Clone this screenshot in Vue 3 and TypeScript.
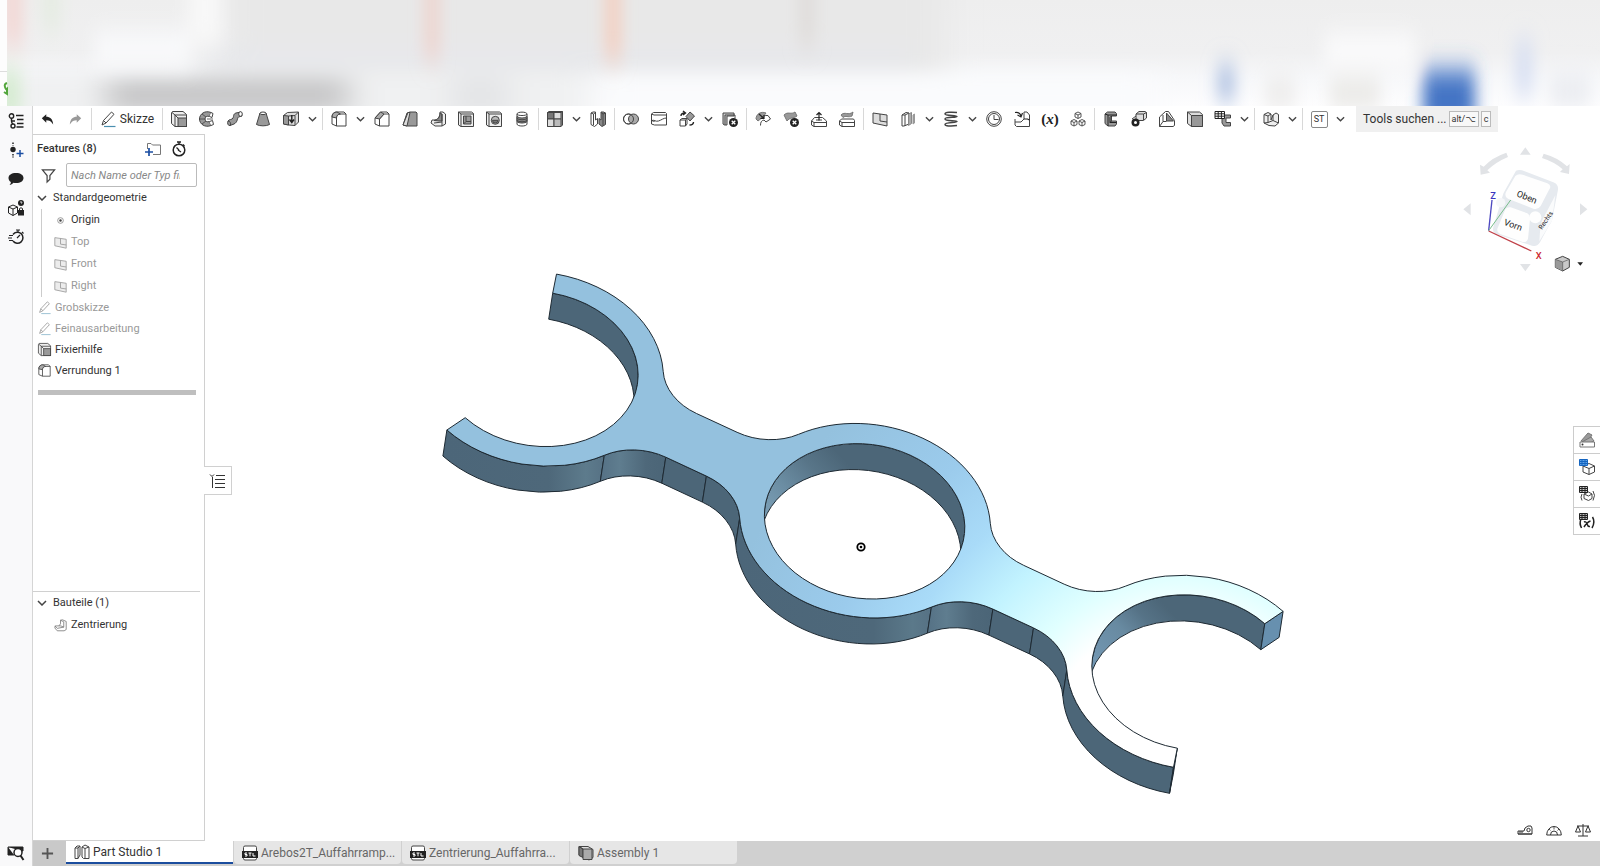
<script setup lang="ts">
import { ref } from 'vue'

interface Tool {
  icon?: string
  label?: string
  kind?: 'sep' | 'menu'
}
interface Feature {
  name: string
  icon: string
  muted?: boolean
}

/* ---------- icons, 16 x 16 units ---------- */
const badge =
  '<circle cx="11.5" cy="11.5" r="4.5" fill="#222" stroke="none"/><path d="M9.7 9.7l3.6 3.6M13.3 9.7l-3.6 3.6" stroke="#fff" stroke-width="1.3"/>'
const icons: Record<string, string> = {
  undo: '<path d="M1 6.500L6.500 1.500v3.200C11 4.700 14.500 7.500 15 14C12.500 9.800 10 8.800 6.500 8.800V12z" fill="#222" stroke="none"/>',
  redo: '<path d="M15 6.500L9.500 1.500v3.200C5 4.700 1.500 7.500 1 14C3.500 9.800 6 8.800 9.500 8.800V12z" fill="#999" stroke="none"/>',
  pen: '<path d="M2 14l1.500-4.500L11.500 1l2.500 2.300L6 12zM3.500 9.500L6 12"/><path d="M4 15.500h11.500" stroke="#4a8fb0" stroke-width="1.200"/>',
  extrude: '<path d="M.5 2l1-1.500H12l3.500 3v12H4L.5 12.500z" fill="#eee"/><path d="M1 1.500l3 2.500M4 4v11.500M4 4h11.500"/><rect x="7" y="7" width="8.500" height="8.500" fill="#999"/><path d="M4 4l3 3"/>',
  revolve: '<path d="M12 1.500C6-1 .5 3 .5 8s5.500 9 11.500 6.500l-1.500-4C8 11.500 6 10 6 8s2-3.500 4.500-2.500z" fill="#999"/><path d="M12 1.500l2 1-1 4-2.500-1M10.500 10.500l3-1 1 4-2.500 1" fill="#fff"/><path d="M.5 8H6M3 3l4 3M3 13l4-3M8 8h6" stroke-width=".8"/>',
  sweep: '<path d="M1 10c1-2 4-1 5-3s0-4 3-5l5-1 1 4-3.500 1C10 7 11 11 7 13l-4 1.500C1 15 0 12 1 10z" fill="#999"/><ellipse cx="13.500" cy="3" rx="1.800" ry="2.300" fill="#fff"/><path d="M1 10c2 0 3 2 2.500 4.500"/>',
  loft: '<path d="M5 2L1.500 13.500c3 1.800 10 1.800 13 0L11 2z" fill="#999"/><ellipse cx="8" cy="2.300" rx="3" ry="1.300" fill="#fff"/>',
  thicken: '<path d="M.5 4.500l4-3 11-.5v10l-3.500 3.500-6-.5-5.500-1z" fill="#ddd"/><path d="M.5 4.500l5 .5V14l-5-1z" fill="#999"/><path d="M5.500 5l6.500-.5V14.500M12 4.500L15.500 1"/><path d="M8.800 4v7M6.500 8.500L8.800 11.500 11 8.500" stroke="#222" stroke-width="1.400"/>',
  fillet: '<path d="M5.500 15V6.500C5.500 4 7 3 9.500 3H15v12zM5.500 15L1 13V6C1 2.500 3 1 6 1h7l2 2" fill="#fff"/><path d="M1 6C1 3 3 1 6 1l3.500 2C7 3 5.500 4.500 5.500 7z" fill="#aaa"/>',
  chamfer: '<path d="M5.500 15V8l4.500-5h5v12zM5.500 15L1 13V7l5.500-6H13l2 2" fill="#fff"/><path d="M1 7l5.500-6L10 3 5.500 8z" fill="#aaa"/>',
  draft: '<path d="M1 14L5 2l3-1h6l1 1v13H5z" fill="#999"/><path d="M1 14L6 1.500h2L5 15z" fill="#ddd"/>',
  rib: '<path d="M10 1h3l2.500 2v10L12 15H5l-4-3 1-3h3c4-1 5-4 5-8z" fill="#eee"/><path d="M10 2c0 4-2 7-6 7.500l5 .5h3V3z" fill="#888"/><path d="M12 3v8l-8 1M12 11v4"/>',
  shell: '<path d="M.5 1h13l2 1.500v13H3L.5 14z" fill="#eee"/><path d="M.5 1L3 3M3 3h12.500M3 3v12.500"/><path d="M5.500 5h7.500v8H5.500z" fill="#999"/><path d="M8 5v5.500h5M8 10.500L5.500 13"/>',
  hole: '<path d="M.5 1h13l2 1.500v13H3L.5 14z" fill="#eee"/><path d="M.5 1L3 3M3 3h12.500M3 3v12.500"/><circle cx="9.300" cy="9.300" r="4" fill="#bbb"/><path d="M6.500 9.300a2.800 2.800 0 1 0 5.600 0z" fill="#777"/>',
  thread: '<path d="M3 3c0-2.500 10-2.500 10 0v10c0 2.700-10 2.700-10 0z" fill="#fff"/><path d="M3 3c0 2 10 2 10 0"/><path d="M3 5.500c2 2 8 2 10 0v5c-2 2-8 2-10 0z" fill="#888"/><path d="M3 7.500c2 1.700 8 1.700 10 0M3 9.500c2 1.700 8 1.700 10 0"/>',
  pattern: '<path d="M.5 1.500L2 .5h13.500v13.500L14 15.500H.5z" fill="#999"/><path d="M.5 1.500H7v6.500H.5z" fill="#777"/><path d="M7 1.500h7V8H7zM.5 8H7v7.500H.5z" fill="#ddd"/><path d="M7 8h7v7.500H7z" fill="#bbb"/><path d="M14 1.500l1.500-1"/>',
  mirror: '<path d="M1 2l2-1h2.500v8l2-1.500V13l-3 2.500-3.500-2z" fill="#fff"/><path d="M1 2l2.500 1V14M3.500 3l2-1.500"/><path d="M15.500 2l-2-1H11v8L9 7.500V13l3 2.500 3.500-2z" fill="#888"/><path d="M15.500 2L13 3v11.500M13 3l-2-1.500"/>',
  boolean: '<circle cx="5.500" cy="8" r="5" fill="#fff"/><circle cx="10.500" cy="8" r="5" fill="#aaa"/><circle cx="5.500" cy="8" r="5"/>',
  split: '<path d="M.5 3L2.500 1.500h12l1 1V14h-12l-3-1z" fill="#fff"/><path d="M.5 3l2.500 1h12.500M.5 9.500c3-1 4 1.500 7 .5s5-3 8-3M.5 9.500l3 1"/>',
  transform: '<path d="M1 9l2-1.500h5V13l-1.500 2H1z" fill="#fff"/><path d="M1 9h5.500V15M6.500 9L8 7.500"/><path d="M11 1l4.500 4L11 10 7 5.500z" fill="#999"/><path d="M2 5c0-2 1-3 4-3M4 0l2.500 2L4 4M14.500 11c0 2-1 3-4 3" stroke="#222" stroke-width="1.400"/>',
  deletePart: '<path d="M1 2h11v3H5v9H2.500L1 13z" fill="#ccc"/><path d="M3 4h10v3M3 4v10" />' + badge,
  moveFace: '<path d="M1 8C1 3 6 0 11 2l-3 4-5 4z" fill="#999" stroke="#777"/><path d="M5.500 14.500C5.500 11 6.500 9.500 9 9l2 2 4.500-3-2.500-3.500c-3-.5-6 1-7 3" fill="#fff"/><path d="M4 3l5 4.500M9 4v3.500H5.500" stroke="#222" stroke-width="1.200"/>',
  deleteFace: '<path d="M1 4c4-4 7 0 11-3l2 4C10 8 7 6 4 10z" fill="#999" stroke="#777"/>' + badge,
  modify: '<path d="M.5 10l3-3.500h8l4 3.500v5.500H3L.5 14z" fill="#fff"/><path d="M.5 10L3 11.500h12.500M3 11.500v4M5 9h6"/><path d="M8 9.500V1.500M5.500 4L8 1.500 10.500 4" stroke="#222" stroke-width="1.200"/>',
  replace: '<path d="M2 4c4-4 7 1 12-3l-1 4c-4 2-6-1-9 1.500z" fill="#999" stroke="#777"/><path d="M.5 10l2-2h12l1 1.500v6H3L.5 14z" fill="#fff"/><path d="M.5 10L3 11.500h12.500M3 11.500v4"/>',
  plane: '<path d="M1 2l14 2v11L1 12z" fill="#ddd"/><path d="M8 3v7l7 1"/>',
  frame: '<path d="M2 4l4-2.500 3 .5v11l-5 2H2z" fill="#fff"/><path d="M2 4h3v11M5 4l4-2"/><path d="M8.500 3l3-1.500v11l-3 2z" fill="#aaa" stroke="#888"/><path d="M13 4l1.500-1v9L13 13z" fill="#999" stroke="#999"/>',
  helix: '<path d="M14 1.500C9 1 2 1 2 3s12 1 12 2.500S2 5.500 2 8s12 1 12 2.500-12 .5-12 3 12 1 12 1" stroke-width="1.500"/>',
  curve: '<circle cx="8" cy="8" r="7.300"/><circle cx="8" cy="8" r="5.500"/><path d="M8 4v4.500h4.500"/>',
  importShape: '<path d="M1 8v6l1.500 1.500h13V4l-2.500-3h-3v7L7 11H1" fill="#fff"/><path d="M10 8h3.500l2 1M1 1.500C4 1 6 2 7 5M3.500 4L7 6l1.500-4" stroke="#222" stroke-width="1.200"/>',
  cubes: '<g stroke-width=".9"><path d="M5 2.500L8 1l3 1.500V6L8 7.500 5 6zM5 2.500L8 4l3-1.500M8 4v3.500"/><path d="M1 10l3-1.500L7 10v3.500L4 15l-3-1.500zM1 10l3 1.500L7 10M4 11.500V15"/><path d="M9 10l3-1.500 3 1.500v3.500L12 15l-3-1.500zM9 10l3 1.500 3-1.500M12 11.500V15"/></g>',
  sheet: '<path d="M2 3l2.500-2H12l1.500 1.500V5H8.500v5h5v3L12 15H5L2 12.500z" fill="#999"/><path d="M2 3l3 1h8.500M5 4v11M8.500 10L7 11.500h6.500M8.500 5L7 6.500v5" stroke="#222"/>',
  convert: '<path d="M5 3l3-2.500h6l1.500 1V7l-3 2.500H5z" fill="#ddd"/><path d="M5 3h7.500v6M12.500 3l3-1.500M1 8l4-3"/><circle cx="4.500" cy="11.500" r="4" fill="#222" stroke="none"/><circle cx="4.500" cy="11.500" r="1.500" fill="#fff" stroke="none"/>',
  flange: '<path d="M.5 6l6-5.500h3l6 9v5l-1.500 1H.5z" fill="#fff"/><path d="M7.500 2l7 8h-7z" fill="#888"/><path d="M4 4v6.500M.5 15.500L4 10.500h3.500"/>',
  tab: '<path d="M.5 1h12l3 2.500v12H4.500l-4-3z" fill="#ddd"/><path d="M4.500 4.500h11v11h-11z" fill="#999"/><path d="M.5 1l4 3.500"/>',
  table: '<path d="M7 4h8.500v3H11v4.500h4.500V15H9l-2-3z" fill="#999"/><path d="M0 .5h9.500v7H0zM0 2.800h9.500M0 5.200h9.500M3.200.5v7M6.400.5v7" fill="#fff" stroke="#222"/>',
  flat: '<path d="M1 3.500l4-2L8 3v6l2-5 3-2 2.500 1.500V12L12 15l-6-.5L1 12z" fill="#eee"/><path d="M1 3.500L5 5v6.500L1 12M5 5l3-2M5 11.500l5-2 5.500 2.500M10 4v5.500"/>',
  folderAdd: '<path d="M2.500 8V2.500H6L7.500 4h8v9.500H8" stroke="#777"/><path d="M4 7v8M0 11h8" stroke="#1c4fa3" stroke-width="1.700"/>',
  stopwatch: '<circle cx="8" cy="9" r="5.800" stroke="#222" stroke-width="1.500"/><path d="M6 1h4M8 1v2.500M12 3.500l1.500 1.500M8 9L5.500 6.500M7 9l3 2" stroke="#222" stroke-width="1.300"/>',
  filter: '<path d="M1.500 2h13L9.500 8v4L6.500 15V8z" stroke-width="1.300"/>',
  part: '<path d="M8 1.500L10.500 1 15 3v10l-2.500 1.500H4L1 11l.5-2.500H6L8 6z" fill="#fff" stroke="#777"/><path d="M8 1.500L12 3.500v6.500L4 11.500M6 8.500h2.500L12 10M1 8.500L4 11.500" stroke="#777"/>',
  origin: '<circle cx="8" cy="8" r="3.500" stroke="#888"/><circle cx="8" cy="8" r="1.500" fill="#444" stroke="none"/>',
  partStudio: '<path d="M1 4l2-2h3v9L4 14.500H1zM1 4h3v10.500M4 4l2-2M8 3l3-2 4 2v11.500H9.500L8 13zM8 3l3 1.500V14.500M11 4.500L15 3" fill="#fff"/>',
  stl: '<path d="M1.500 2.500Q1.500 1 3 1h10q1.500 0 1.500 1.500v11q0 1.500-1.500 1.500H3q-1.500 0-1.500-1.500z" fill="#fff"/><rect x="0" y="6" width="16" height="7" fill="#222" stroke="none"/><path d="M5 8H3v1.500h2V11H3M6.500 8h3M8 8v3.300M11 8v3h2.500" stroke="#fff"/>',
  assembly: '<path d="M1 1.500h9l5 3v8L11 15 1 10z" fill="#ddd"/><path d="M1 1.500v9l4 2V4z" fill="#777"/><path d="M5 4h9v10.500H5z" fill="#aaa"/><path d="M1 1.500L5 4"/>',
  tree: '<g stroke="#222" stroke-width="1.400"><circle cx="3.500" cy="3" r="2.200"/><circle cx="5" cy="13" r="2"/><path d="M3.500 5v3q0 2 1.500 3M4 8h3M8 2.500h7.500M9 6.500h6.500M9 10.500h6.500M8.500 14h7"/></g>',
  insert: '<path d="M5 .5v3M5 12v3.500" stroke="#222" stroke-width="1.500" stroke-dasharray="1.500 1"/><circle cx="5" cy="7.500" r="2.700" fill="#222" stroke="none"/><path d="M12 8v7M8.500 11.500h7" stroke="#1c4fa3" stroke-width="1.500"/>',
  comment: '<path d="M8 2c4.500 0 7.500 2 7.500 5S12.500 12 8 12c-1 0-2 0-2.500-.2C4.500 13 3 14 1.500 14c1-.8 1.500-2 1.300-3C1.300 10 .5 8.500 .5 7 .5 4 3.500 2 8 2z" fill="#222" stroke="none"/>',
  cubeLock: '<path d="M.5 7l4.500-2 4.500 2v6L5 15.500.5 13zM.5 7L5 9l4.500-2M5 9v6.500" stroke="#222"/><circle cx="13" cy="3" r="3" fill="#222" stroke="none"/><path d="M12 2.300q1-1.300 2 0 0 .8-1 1.300" stroke="#fff" stroke-width=".8"/><rect x="10" y="10" width="6" height="5.500" fill="#222" stroke="none"/><path d="M11.500 10V8.500q1.500-1.500 3 0V10" stroke="#222"/>',
  fastWatch: '<path d="M5 5.500A5.500 5.500 0 1 1 5 12" stroke="#222" stroke-width="1.500"/><path d="M8 1h4M10 1v2M14 3l1.500 1.500M9 9l3-3M1 6.500h4M0 9h4M1 11.500h4" stroke="#222" stroke-width="1.200"/>',
  inspect: '<path d="M0 2h15v4h-1M0 2v8h6" fill="#222" stroke="#222"/><circle cx="10" cy="7.500" r="4" fill="#fff" stroke="#222" stroke-width="1.500"/><path d="M12.500 10.500L15.500 15" stroke="#222" stroke-width="2"/>',
  outline: '<path d="M0 1.500l2 2 2-2" stroke="#222"/><path d="M2.500 4v11M6 2.500h9M5 6.500h10M5 10.500h10M5 14.500h10" stroke="#333"/>',
  swatches: '<path d="M2 9l7-8 4 2-5 8z" fill="#999" stroke="#777"/><path d="M3 10l9-5 3 4-6 3z" fill="#aaa" stroke="#777"/><path d="M1 10h14.500v5H1z" fill="#fff" stroke="#777"/><circle cx="3.500" cy="12.500" r="1" fill="#333" stroke="none"/>',
  bom: '<path d="M4 7l6-2.500L15.500 7v6L10 15.500 4 13zM4 7l6 2.500L15.500 7M10 9.500v6" fill="#fff"/><path d="M.5.500h8v6h-8zM.5 2.500h8M.5 4.500h8M3 .5v6M6 .5v6" fill="#5ea2e6" stroke="#1565c0"/>',
  bomVar: '<path d="M5 8l4.500-2L13 8v4.500L9.500 14.500 5 12.500zM5 8l4.500 2L13 8M3 8q-2 3 0 6.500M14 5q3 4 0 9.500"/><path d="M.5.500h8v6h-8zM.5 2.500h8M.5 4.500h8M3 .5v6M6 .5v6" fill="#ccc" stroke="#222"/>',
  xTable: '<path d="M2 6q-2 4.500 .5 9M13.500 4q3 5-.5 11M5 9q2-1 3 2t3 2.500M11.500 8Q8 9 5 14" stroke="#222" stroke-width="1.500"/><path d="M.5.500h8v6h-8zM.5 2.500h8M.5 4.500h8M3 .5v6M6 .5v6" fill="#bbb" stroke="#222"/>',
  tape: '<path d="M1 9h6l1-3 3-2h3l1 2v6H1zM1 12h14M3 9v2M5 9v2" stroke="#333"/><circle cx="11.500" cy="8" r="1.700" stroke="#333"/>',
  protractor: '<path d="M.7 13a7.300 8.500 0 0 1 14.600 0zM4.500 13a3.500 4 0 0 1 7 0" stroke="#333"/><path d="M8 5v2.500M3 7l1.500 1.500M13 7l-1.500 1.500" stroke="#333" stroke-width=".8"/>',
  scale: '<path d="M8 2v12M3 14h10M2 4h12M0.500 10l2.500-6 2.500 6zM10.500 10L13 4l2.500 6z" stroke="#333"/>',
}

const sep: Tool = { kind: 'sep' }
const menu = (label: string): Tool => ({ kind: 'menu', label })
const tool = (icon: string, label: string): Tool => ({ icon, label })

const tools: Tool[] = [
  sep,
  tool('extrude', 'Extrudieren'), tool('revolve', 'Drehen'), tool('sweep', 'Sweep'), tool('loft', 'Loft'), tool('thicken', 'Verdicken'), menu('Weitere Körper'),
  sep,
  tool('fillet', 'Verrundung'), menu('Weitere Verrundungen'), tool('chamfer', 'Fase'), tool('draft', 'Formschräge'), tool('rib', 'Rippe'), tool('shell', 'Wandung'), tool('hole', 'Bohrung'), tool('thread', 'Gewinde'),
  sep,
  tool('pattern', 'Muster'), menu('Weitere Muster'), tool('mirror', 'Spiegeln'),
  sep,
  tool('boolean', 'Boolesch'), tool('split', 'Teilen'), tool('transform', 'Transformieren'), menu('Weitere Transformationen'), tool('deletePart', 'Bauteil löschen'),
  sep,
  tool('moveFace', 'Fläche verschieben'), tool('deleteFace', 'Fläche löschen'), tool('modify', 'Fläche ändern'), tool('replace', 'Fläche ersetzen'),
  sep,
  tool('plane', 'Ebene'), tool('frame', 'Rahmen'), menu('Weitere Rahmen'), tool('helix', 'Helix'), menu('Weitere Kurven'), tool('curve', 'Kurve'), tool('importShape', 'Ableiten'), tool('variable', 'Variable'), tool('cubes', 'Zusammengesetztes Bauteil'),
  sep,
  tool('sheet', 'Blechmodell'), tool('convert', 'Konvertieren'), tool('flange', 'Flansch'), tool('tab', 'Lasche'), tool('table', 'Blechtabelle'), menu('Weitere Blechfunktionen'),
  sep,
  tool('flat', 'Abwicklung'), menu('Weitere Abwicklungen'),
  sep,
  tool('st', 'ST'), menu('Eigene Funktionen'),
]

const geometry: Feature[] = [
  { name: 'Origin', icon: 'origin' },
  { name: 'Top', icon: 'plane', muted: true },
  { name: 'Front', icon: 'plane', muted: true },
  { name: 'Right', icon: 'plane', muted: true },
]
const features: Feature[] = [
  { name: 'Grobskizze', icon: 'pen', muted: true },
  { name: 'Feinausarbeitung', icon: 'pen', muted: true },
  { name: 'Fixierhilfe', icon: 'extrude' },
  { name: 'Verrundung 1', icon: 'fillet' },
]
const rail = [
  { icon: 'tree', label: 'Featureliste' },
  { icon: 'insert', label: 'Einfügen' },
  { icon: 'comment', label: 'Kommentare' },
  { icon: 'cubeLock', label: 'Konfiguration' },
  { icon: 'fastWatch', label: 'Verlauf' },
]
const sideTools = [
  { icon: 'swatches', label: 'Darstellungen' },
  { icon: 'bom', label: 'Stückliste' },
  { icon: 'bomVar', label: 'Konfigurationstabelle' },
  { icon: 'xTable', label: 'Variablentabelle' },
]
const measureTools = [
  { icon: 'tape', label: 'Messen' },
  { icon: 'protractor', label: 'Winkel' },
  { icon: 'scale', label: 'Masse' },
]
const tabs = [
  { name: 'Part Studio 1', icon: 'partStudio' },
  { name: 'Arebos2T_Auffahrramp...', icon: 'stl' },
  { name: 'Zentrierung_Auffahrra...', icon: 'stl' },
  { name: 'Assembly 1', icon: 'assembly' },
]
const activeTab = ref(0)
const search = ref('')

/* ---------- part geometry ----------
   The part is defined in its own plane: three rings on one axis, joined by
   bars with rounded corners. It is then projected to the view. */
const D = 3.68
const OUT = 1.252
const FIL = 0.62
const BAR = 0.332
const FX = Math.sqrt((OUT + FIL) ** 2 - (BAR + FIL) ** 2)
const FY = BAR + FIL
const TAN = (Math.atan2(FY, FX) * 180) / Math.PI
const TIP = 71
const DROP: [number, number] = [-4, 26]

type Seg = { c?: [number, number]; r?: number; from?: number; to?: number; p?: [number, number]; q?: [number, number] }

function view([a, b]: [number, number], low = false): string {
  const x = 865 + 88.88 * a - 46.26 * b + (low ? DROP[0] : 0)
  const y = 520.7 + 41.26 * a + 65.84 * b + (low ? DROP[1] : 0)
  return `${x.toFixed(1)} ${y.toFixed(1)}`
}
function polar(c: [number, number], r: number, deg: number): [number, number] {
  const t = (deg * Math.PI) / 180
  return [c[0] + r * Math.cos(t), c[1] + r * Math.sin(t)]
}
const arc = (c: [number, number], r: number, from: number, to: number): Seg => ({ c, r, from, to })
const startOf = (s: Seg) => (s.c ? polar(s.c, s.r!, s.from!) : s.p!)
const endOf = (s: Seg) => (s.c ? polar(s.c, s.r!, s.to!) : s.q!)
const reverse = (s: Seg): Seg => (s.c ? { ...s, from: s.to, to: s.from } : { p: s.q, q: s.p })
function draw(s: Seg, low = false): string {
  if (!s.c) return `L${view(endOf(s), low)}`
  const large = Math.abs(s.to! - s.from!) > 180 ? 1 : 0
  const sweep = s.to! > s.from! ? 1 : 0
  return `A${(100.7 * s.r!).toFixed(1)} ${(77.1 * s.r!).toFixed(1)} 8.6 ${large} ${sweep} ${view(endOf(s), low)}`
}
const wall = (s: Seg) => `M${view(startOf(s))}${draw(s)}L${view(endOf(s), true)}${draw(reverse(s), true)}Z`

const L: [number, number] = [-D, 0]
const M: [number, number] = [0, 0]
const R: [number, number] = [D, 0]

function joint(x: number): Seg[] {
  return [
    arc([x + FX, FY], FIL, 180 + TAN, 270),
    { p: [x + FX, BAR], q: [x + D - FX, BAR] },
    arc([x + D - FX, FY], FIL, 270, 360 - TAN),
  ]
}
const front: Seg[] = [
  arc(L, OUT, 180 - TIP, TAN),
  ...joint(-D),
  arc(M, OUT, 180 - TAN, TAN),
  ...joint(0),
  arc(R, OUT, 180 - TAN, TIP),
]
const flip = (s: Seg): Seg =>
  s.c
    ? { c: [-s.c[0], -s.c[1]], r: s.r, from: s.from! + 180, to: s.to! + 180 }
    : { p: [-s.p![0], -s.p![1]], q: [-s.q![0], -s.q![1]] }

const innerR = arc(R, 1, TIP, 360 - TIP)
const innerL = flip(innerR)
const face =
  `M${view(startOf(front[0]))}` +
  front.map((s) => draw(s)).join('') +
  `L${view(startOf(innerR))}${draw(innerR)}` +
  `L${view(startOf(flip(front[0])))}` +
  front.map((s) => draw(flip(s))).join('') +
  `L${view(startOf(innerL))}${draw(innerL)}Z`
const circle = (low: boolean) => {
  const a = arc(M, 1, 0, 179)
  const b = arc(M, 1, 179, 360)
  return `M${view(startOf(a), low)}${draw(a, low)}${draw(b, low)}Z`
}
const bore = circle(false)
const boreLow = circle(true)
const fills = ['wallA', 'wallB', 'wallC', 'wallC', 'wallA2', 'wallD', 'wallC', 'wallC', 'wallC']
const backL = wall(arc(L, 1, -109, -20.8))
const backR = wall(arc(R, 1, 159.2, 289))
const quad = (p: [number, number], q: [number, number]) => `M${view(p)}L${view(q)}L${view(q, true)}L${view(p, true)}Z`
const endTop = quad(polar(R, 1, -TIP), polar(R, OUT, -TIP))
const endLow = quad(polar(R, OUT, TIP), polar(R, 1, TIP))
</script>

<template>
  <div class="app">
    <header class="blurred" aria-hidden="true">
      <svg viewBox="0 0 1600 106" preserveAspectRatio="none">
        <defs>
          <linearGradient id="hb" x1="0" y1="0" x2="0" y2="1">
            <stop offset="0" stop-color="#eeeeee" />
            <stop offset=".5" stop-color="#f0f0f1" />
            <stop offset=".75" stop-color="#f7f8fa" />
            <stop offset="1" stop-color="#fdfdfe" />
          </linearGradient>
          <filter id="wide" filterUnits="userSpaceOnUse" x="-60" y="-60" width="1720" height="230"><feGaussianBlur stdDeviation="16 9" /></filter>
          <filter id="soft" filterUnits="userSpaceOnUse" x="-60" y="-60" width="1720" height="230"><feGaussianBlur stdDeviation="8 13" /></filter>
        </defs>
        <rect width="1600" height="106" fill="url(#hb)" />
        <g filter="url(#wide)">
          <rect x="225" y="-40" width="720" height="112" fill="#e8e8e8" />
          <rect x="200" y="45" width="710" height="25" fill="#e7e8eb" />
          <rect x="600" y="74" width="560" height="60" fill="#fafbfd" />
          <rect x="-20" y="72" width="610" height="60" fill="#f0f1f2" />
          <rect x="105" y="77" width="245" height="36" fill="#c9c9ca" />
          <rect x="450" y="76" width="60" height="40" fill="#e4e5e7" />
        </g>
        <g filter="url(#soft)">
          <rect x="95" y="34" width="95" height="30" fill="#fafbfd" />
          <rect x="188" y="-30" width="34" height="76" fill="#f8f8f8" />
          <rect x="1325" y="36" width="90" height="30" fill="#fcfcfd" />
          <rect x="4" y="-30" width="18" height="76" fill="#f3d6d3" />
          <rect x="42" y="-30" width="18" height="62" fill="#e5ece2" />
          <rect x="426" y="-30" width="12" height="90" fill="#efcfc8" />
          <rect x="606" y="-30" width="14" height="90" fill="#f4ccbc" />
          <rect x="800" y="-30" width="14" height="76" fill="#dedad8" />
          <rect x="0" y="70" width="20" height="50" fill="#d3ebce" />
          <rect x="1218" y="66" width="16" height="34" fill="#a6bade" />
          <rect x="1265" y="78" width="30" height="30" fill="#ecebea" />
          <rect x="1330" y="78" width="50" height="30" fill="#e9e8e5" />
          <rect x="1423" y="70" width="52" height="60" fill="#4273c4" />
          <rect x="1516" y="40" width="16" height="56" fill="#d6def2" />
          <rect x="1550" y="76" width="40" height="30" fill="#e9ebf0" />
        </g>
        <rect width="7" height="106" fill="#fdfdfd" />
        <path d="M0 71.500h7" stroke="#dddddd" />
        <path d="M7 83q-3 1-2 4t2 2v5l-3-2" fill="none" stroke="#53a63c" stroke-width="2" />
      </svg>
    </header>

    <div class="workspace">
      <nav class="rail" aria-label="Seitenleiste">
        <button v-for="r in rail" :key="r.icon" type="button" :aria-label="r.label">
          <svg class="ic" viewBox="0 0 16 16" v-html="icons[r.icon]"></svg>
        </button>
        <button type="button" class="last" aria-label="Tab-Manager">
          <svg class="ic" viewBox="0 0 16 16" v-html="icons.inspect"></svg>
        </button>
      </nav>

      <div class="main">
        <div class="toolbar" role="toolbar" aria-label="Werkzeuge">
          <button type="button" class="tool" aria-label="Rückgängig"><svg class="ic sm" viewBox="0 0 16 16" v-html="icons.undo"></svg></button>
          <button type="button" class="tool" aria-label="Wiederholen"><svg class="ic sm" viewBox="0 0 16 16" v-html="icons.redo"></svg></button>
          <span class="sep"></span>
          <button type="button" class="sketch">
            <svg class="ic" viewBox="0 0 16 16" v-html="icons.pen"></svg><span>Skizze</span>
          </button>
          <template v-for="(t, i) in tools" :key="i">
            <span v-if="t.kind === 'sep'" class="sep"></span>
            <button v-else-if="t.kind === 'menu'" type="button" class="drop" :aria-label="t.label">
              <svg viewBox="0 0 10 6"><path d="M1 1l4 4 4-4" /></svg>
            </button>
            <button v-else type="button" class="tool" :aria-label="t.label">
              <span v-if="t.icon === 'st'" class="st">ST</span>
              <span v-else-if="t.icon === 'variable'" class="var">(<i>x</i>)</span>
              <svg v-else class="ic" viewBox="0 0 16 16" v-html="icons[t.icon!]"></svg>
            </button>
          </template>
          <button type="button" class="find"><span>Tools suchen ...</span><kbd>alt/⌥</kbd><kbd>c</kbd></button>
        </div>

        <div class="content">
          <aside class="panel">
            <div class="title">
              <h2>Features (8)</h2>
              <button type="button" aria-label="Ordner hinzufügen"><svg class="ic" viewBox="0 0 16 16" v-html="icons.folderAdd"></svg></button>
              <button type="button" aria-label="Regenerierungszeit"><svg class="ic" viewBox="0 0 16 16" v-html="icons.stopwatch"></svg></button>
            </div>
            <div class="filter">
              <svg class="ic" viewBox="0 0 16 16" v-html="icons.filter"></svg>
              <input v-model="search" type="text" aria-label="Features filtern" placeholder="Nach Name oder Typ filtern" />
            </div>
            <button type="button" class="row head">
              <svg class="chev" viewBox="0 0 10 6"><path d="M1 1l4 4 4-4" /></svg>Standardgeometrie
            </button>
            <ul class="children">
              <li v-for="g in geometry" :key="g.name" class="row" :class="{ muted: g.muted }">
                <svg class="ic li" viewBox="0 0 16 16" v-html="icons[g.icon]"></svg>{{ g.name }}
              </li>
            </ul>
            <ul class="features">
              <li v-for="f in features" :key="f.name" class="row" :class="{ muted: f.muted }">
                <svg class="ic li" viewBox="0 0 16 16" v-html="icons[f.icon]"></svg>{{ f.name }}
              </li>
            </ul>
            <div class="rollback"></div>
            <section class="parts">
              <button type="button" class="row head">
                <svg class="chev" viewBox="0 0 10 6"><path d="M1 1l4 4 4-4" /></svg>Bauteile (1)
              </button>
              <div class="row part"><svg class="ic li" viewBox="0 0 16 16" v-html="icons.part"></svg>Zentrierung</div>
            </section>
          </aside>

          <main class="canvas">
            <button type="button" class="collapse" aria-label="Liste einklappen">
              <svg class="ic" viewBox="0 0 16 16" v-html="icons.outline"></svg>
            </button>

            <svg class="model" viewBox="205 134 1395 707" role="img" aria-label="Zentrierung">
              <defs>
                <radialGradient id="top" gradientUnits="userSpaceOnUse" cx="1180" cy="760" r="480">
                  <stop offset="0" stop-color="#ffffff" />
                  <stop offset=".29" stop-color="#ffffff" />
                  <stop offset=".38" stop-color="#e0ffff" />
                  <stop offset=".5" stop-color="#c2f3ff" />
                  <stop offset=".62" stop-color="#a9dbf8" />
                  <stop offset=".77" stop-color="#9bcbec" />
                  <stop offset="1" stop-color="#94c1de" />
                </radialGradient>
                <linearGradient id="wallA" gradientUnits="userSpaceOnUse" x1="445" y1="0" x2="605" y2="0">
                  <stop offset="0" stop-color="#4c6679" /><stop offset=".65" stop-color="#4e687a" /><stop offset=".88" stop-color="#5d7b8c" /><stop offset="1" stop-color="#567184" />
                </linearGradient>
                <linearGradient id="wallB" gradientUnits="userSpaceOnUse" x1="600" y1="0" x2="666" y2="0">
                  <stop offset="0" stop-color="#557185" /><stop offset=".3" stop-color="#5f7d8f" /><stop offset=".7" stop-color="#4e687a" /><stop offset="1" stop-color="#4b6577" />
                </linearGradient>
                <linearGradient id="wallA2" gradientUnits="userSpaceOnUse" x1="737" y1="0" x2="932" y2="0">
                  <stop offset="0" stop-color="#4c6679" /><stop offset=".7" stop-color="#4e687a" /><stop offset=".9" stop-color="#5b798a" /><stop offset="1" stop-color="#567184" />
                </linearGradient>
                <linearGradient id="wallD" gradientUnits="userSpaceOnUse" x1="927" y1="0" x2="992" y2="0">
                  <stop offset="0" stop-color="#557185" /><stop offset=".3" stop-color="#5f7d8f" /><stop offset=".7" stop-color="#4e687a" /><stop offset="1" stop-color="#4b6577" />
                </linearGradient>
                <linearGradient id="wallC"><stop offset="0" stop-color="#4c6678" /><stop offset="1" stop-color="#4c6678" /></linearGradient>
                <linearGradient id="bore" gradientUnits="userSpaceOnUse" x1="765" y1="515" x2="835" y2="450">
                  <stop offset="0" stop-color="#7b9fb6" /><stop offset=".35" stop-color="#6b8da3" /><stop offset=".7" stop-color="#587588" /><stop offset="1" stop-color="#4c6678" />
                </linearGradient>
                <linearGradient id="boreR" gradientUnits="userSpaceOnUse" x1="1092" y1="667" x2="1162" y2="602">
                  <stop offset="0" stop-color="#7398b4" /><stop offset=".5" stop-color="#688aa1" /><stop offset=".75" stop-color="#567387" /><stop offset="1" stop-color="#4c6678" />
                </linearGradient>
                <clipPath id="boreClip"><path :d="bore" /></clipPath>
              </defs>
              <g class="edges">
                <path :d="backL" fill="url(#wallC)" />
                <path :d="backR" fill="url(#boreR)" />
                <path :d="endTop" fill="#6790af" />
                <path v-for="(s, i) in front" :key="i" :d="wall(s)" :fill="`url(#${fills[i]})`" />
                <path :d="endLow" fill="#1d2a33" />
                <g clip-path="url(#boreClip)">
                  <path :d="bore" fill="url(#bore)" />
                  <path :d="boreLow" fill="#ffffff" />
                </g>
                <path :d="face + bore" fill="url(#top)" fill-rule="evenodd" />
              </g>
              <circle cx="861" cy="547" r="3.700" fill="#fff" stroke="#000" stroke-width="1.800" />
              <circle cx="861" cy="547" r="1.300" fill="#000" />
            </svg>

            <svg class="cube" viewBox="0 0 480 450" role="img" aria-label="Ansichtswürfel">
              <g fill="#e1e3e6">
                <path d="M240 74l16-22 16 22zM240 402l16 22 16-22zM92 220v36l-22-18zM420 220v36l22-18z" />
                <path d="M120 104l2 30 28-6-8-7q24-24 62-40l-5-13q-42 14-68 42zM389 102l-2 30-27-6 8-8q-24-22-62-34l5-13q44 12 70 38z" />
              </g>
              <path d="M228 122q8-4 18-1l94 36q16 6 14 22l-18 92q-2 8-8 14l-28 52q-8 14-24 10l-106-34q-14-6-10-22l28-94q2-8 6-14z" fill="#e6eaef" />
              <path d="M226 138q8-8 22-4l74 26q14 6 6 18l-26 50q-8 12-22 8l-76-30q-12-6-6-20z" fill="#fefefe" />
              <path d="M196 238q6-8 16-6l50 18q10 6 8 18l-6 58q-4 12-16 10l-68-24q-10-4-8-16z" fill="#fefefe" />
              <path d="M346 196l-10 76-38 62q0-30 8-62z" fill="#fafbfc" />
              <circle cx="286" cy="262" r="18" fill="#fefefe" /><circle cx="182" cy="218" r="14" fill="#f6f7f9" />
              <path d="M146 302l10-92" stroke="#4d48c0" stroke-width="4" />
              <path d="M146 302l66-92" stroke="#79bd8c" stroke-width="3" />
              <path d="M146 303l128 60" stroke="#c04048" stroke-width="4" />
              <text x="151" y="206" class="axis z">Z</text>
              <text x="287" y="387" class="axis x">X</text>
              <text transform="translate(228 198) rotate(22)" class="lab">Oben</text>
              <text transform="translate(190 284) rotate(20)" class="lab">Vorn</text>
              <text transform="translate(306 300) rotate(-56)" class="lab side">Rechts</text>
              <path d="M346 388l22-9 20 9v24l-20 11-22-11z" fill="#c9c9c9" stroke="#444" stroke-width="3" />
              <path d="M346 388l22 8v27l-22-11z" fill="#999" /><path d="M346 388l22 8 20-8M368 396v27" fill="none" stroke="#555" stroke-width="2" />
              <path d="M412 397h17l-8 10z" fill="#222" />
            </svg>

            <div class="side">
              <button v-for="s in sideTools" :key="s.icon" type="button" :aria-label="s.label">
                <svg class="ic" viewBox="0 0 16 16" v-html="icons[s.icon]"></svg>
              </button>
            </div>
            <div class="measure">
              <button v-for="m in measureTools" :key="m.icon" type="button" :aria-label="m.label">
                <svg class="ic" viewBox="0 0 16 16" v-html="icons[m.icon]"></svg>
              </button>
            </div>
          </main>
        </div>

        <div class="tabs">
          <button type="button" class="add" aria-label="Tab hinzufügen">
            <svg viewBox="0 0 14 14"><path d="M7 1v12M1 7h12" /></svg>
          </button>
          <button v-for="(t, i) in tabs" :key="t.name" type="button" class="tab" :class="{ active: i === activeTab }" @click="activeTab = i">
            <svg class="ic" viewBox="0 0 16 16" v-html="icons[t.icon]"></svg><span>{{ t.name }}</span>
          </button>
        </div>
      </div>
    </div>
  </div>
</template>

<style>
html,
body,
#app {
  height: 100%;
}
body {
  margin: 0;
}
</style>

<style scoped>
.app {
  display: flex;
  flex-direction: column;
  height: 100%;
  overflow: hidden;
  background: #fff;
  color: #333;
  font: 12px/16px Roboto, 'Liberation Sans', sans-serif;
}
button {
  display: flex;
  align-items: center;
  justify-content: center;
  padding: 0;
  border: 0;
  background: none;
  color: inherit;
  font: inherit;
}
ul {
  margin: 0;
  padding: 0;
  list-style: none;
}
.ic {
  flex: none;
  width: 16px;
  height: 16px;
  fill: none;
  stroke: #444;
  overflow: visible;
}
.ic.sm {
  width: 13px;
  height: 13px;
}
.blurred {
  flex: none;
  height: 106px;
  overflow: hidden;
}
.blurred svg {
  display: block;
  width: 100%;
  height: 100%;
}
.workspace {
  display: flex;
  flex: 1;
  min-height: 0;
}
.rail {
  display: flex;
  flex: none;
  flex-direction: column;
  box-sizing: border-box;
  width: 33px;
  border-right: 1px solid #d5d5d5;
  background: #f9f9fa;
}
.rail button {
  height: 29px;
}
.rail .last {
  height: 26px;
  margin-top: auto;
}
.main {
  display: flex;
  flex: 1;
  flex-direction: column;
  min-width: 0;
}
.toolbar {
  display: flex;
  flex: none;
  align-items: center;
  height: 26px;
  padding-bottom: 2px;
  overflow: hidden;
}
.tool {
  flex: none;
  width: 28px;
  height: 26px;
}
.drop {
  flex: none;
  width: 15px;
  height: 26px;
}
.drop svg {
  width: 9px;
  height: 6px;
  fill: none;
  stroke: #444;
  stroke-width: 1.5;
}
.sep {
  flex: none;
  width: 1px;
  height: 22px;
  margin: 0 2px;
  background: #d8d8d8;
}
.sketch {
  flex: none;
  gap: 4px;
  width: 66px;
}
.st {
  box-sizing: border-box;
  width: 17px;
  height: 17px;
  border: 1px solid #888;
  border-radius: 2px;
  font-size: 9px;
  line-height: 15px;
}
.var {
  color: #222;
  font: bold 15px/18px 'Liberation Serif', serif;
}
.find {
  flex: none;
  gap: 2px;
  height: 26px;
  margin-left: 8px;
  padding: 0 7px;
  background: #f0f0f0;
}
kbd {
  padding: 0 2px;
  border: 1px solid #bbb;
  background: #f8f8f8;
  font: 9px/14px Roboto, 'DejaVu Sans', sans-serif;
}
.content {
  display: flex;
  flex: 1;
  min-height: 0;
}
.panel {
  display: flex;
  flex: none;
  flex-direction: column;
  box-sizing: border-box;
  width: 172px;
  border: solid #d0d0d0;
  border-width: 1px 1px 1px 0;
  font-size: 11px;
}
.title {
  display: flex;
  align-items: center;
  gap: 10px;
  height: 28px;
  padding: 0 17px 0 4px;
}
.title h2 {
  flex: 1;
  margin: 0;
  font-size: 11px;
  font-weight: 500;
}
.filter {
  display: flex;
  align-items: center;
  gap: 10px;
  height: 24px;
  padding: 0 7px 0 8px;
}
.filter input {
  box-sizing: border-box;
  flex: 1;
  min-width: 0;
  height: 24px;
  padding: 0 16px 0 4px;
  border: 1px solid #bbb;
  border-radius: 2px;
  outline: 0;
  font: italic 11px/16px Roboto, 'Liberation Sans', sans-serif;
}
.filter input::placeholder {
  color: #888;
}
.filter .ic {
  width: 15px;
  height: 15px;
}
.row {
  display: flex;
  align-items: center;
  gap: 4px;
  width: 100%;
  height: 22px;
  white-space: nowrap;
}
.row.head {
  justify-content: flex-start;
  gap: 6px;
  padding-left: 4px;
}
.chev {
  width: 10px;
  height: 6px;
  fill: none;
  stroke: #444;
  stroke-width: 1.5;
}
.ic.li {
  width: 13px;
  height: 13px;
}
.children {
  margin-left: 8px;
  border-left: 1px solid #ccc;
}
.children .row {
  box-sizing: border-box;
  padding-left: 12px;
}
.features .row {
  box-sizing: border-box;
  height: 21px;
  padding-left: 5px;
}
.muted {
  color: #999;
}
.muted .ic {
  opacity: 0.55;
}
.rollback {
  flex: none;
  height: 5px;
  margin: 9px 8px 0 5px;
  background: #bfbfbf;
}
.parts {
  height: 248px;
  margin: auto 4px 0 0;
  border-top: 1px solid #d0d0d0;
}
.parts .part {
  box-sizing: border-box;
  padding-left: 21px;
}
.canvas {
  position: relative;
  flex: 1;
  min-width: 0;
}
.model {
  display: block;
  width: 100%;
  height: 100%;
}
.edges path {
  stroke: #1e2a33;
  stroke-width: 1;
  stroke-linejoin: round;
}
.collapse {
  position: absolute;
  top: 332px;
  left: -1px;
  width: 28px;
  height: 29px;
  border: 1px solid #d0d0d0;
  border-left: 0;
  background: #fff;
}
.cube {
  position: absolute;
  top: -4px;
  right: 0;
  width: 160px;
  height: 150px;
}
.axis {
  font: 500 28px Roboto, sans-serif;
}
.axis.z {
  fill: #3b35c0;
}
.axis.x {
  fill: #cc2a30;
}
.lab {
  fill: #222;
  font: 27px Roboto, sans-serif;
}
.lab.side {
  font-size: 20px;
}
.side {
  position: absolute;
  top: 292px;
  right: 0;
  width: 26px;
  border: solid #ccc;
  border-width: 1px 0 0 1px;
  background: #fff;
}
.side button {
  width: 100%;
  height: 27px;
  border-bottom: 1px solid #ccc;
}
.measure {
  position: absolute;
  right: 9px;
  bottom: 3px;
  display: flex;
  gap: 13px;
}
.tabs {
  display: flex;
  flex: none;
  height: 25px;
  background: #d0d0d0;
}
.add {
  flex: none;
  width: 33px;
  padding-right: 4px;
  background: #c9c9c9;
}
.add svg {
  width: 13px;
  height: 13px;
  fill: none;
  stroke: #555;
  stroke-width: 2;
}
.tab {
  box-sizing: border-box;
  flex: none;
  justify-content: flex-start;
  gap: 3px;
  width: 167px;
  height: 23px;
  margin-right: 1px;
  padding: 0 8px;
  border-radius: 0 0 4px 4px;
  background: #e6e6e6;
  color: #666;
  white-space: nowrap;
}
.tab.active {
  border-bottom: 2px solid #1b4d9e;
  border-radius: 0;
  background: #fff;
  color: #333;
}
</style>
